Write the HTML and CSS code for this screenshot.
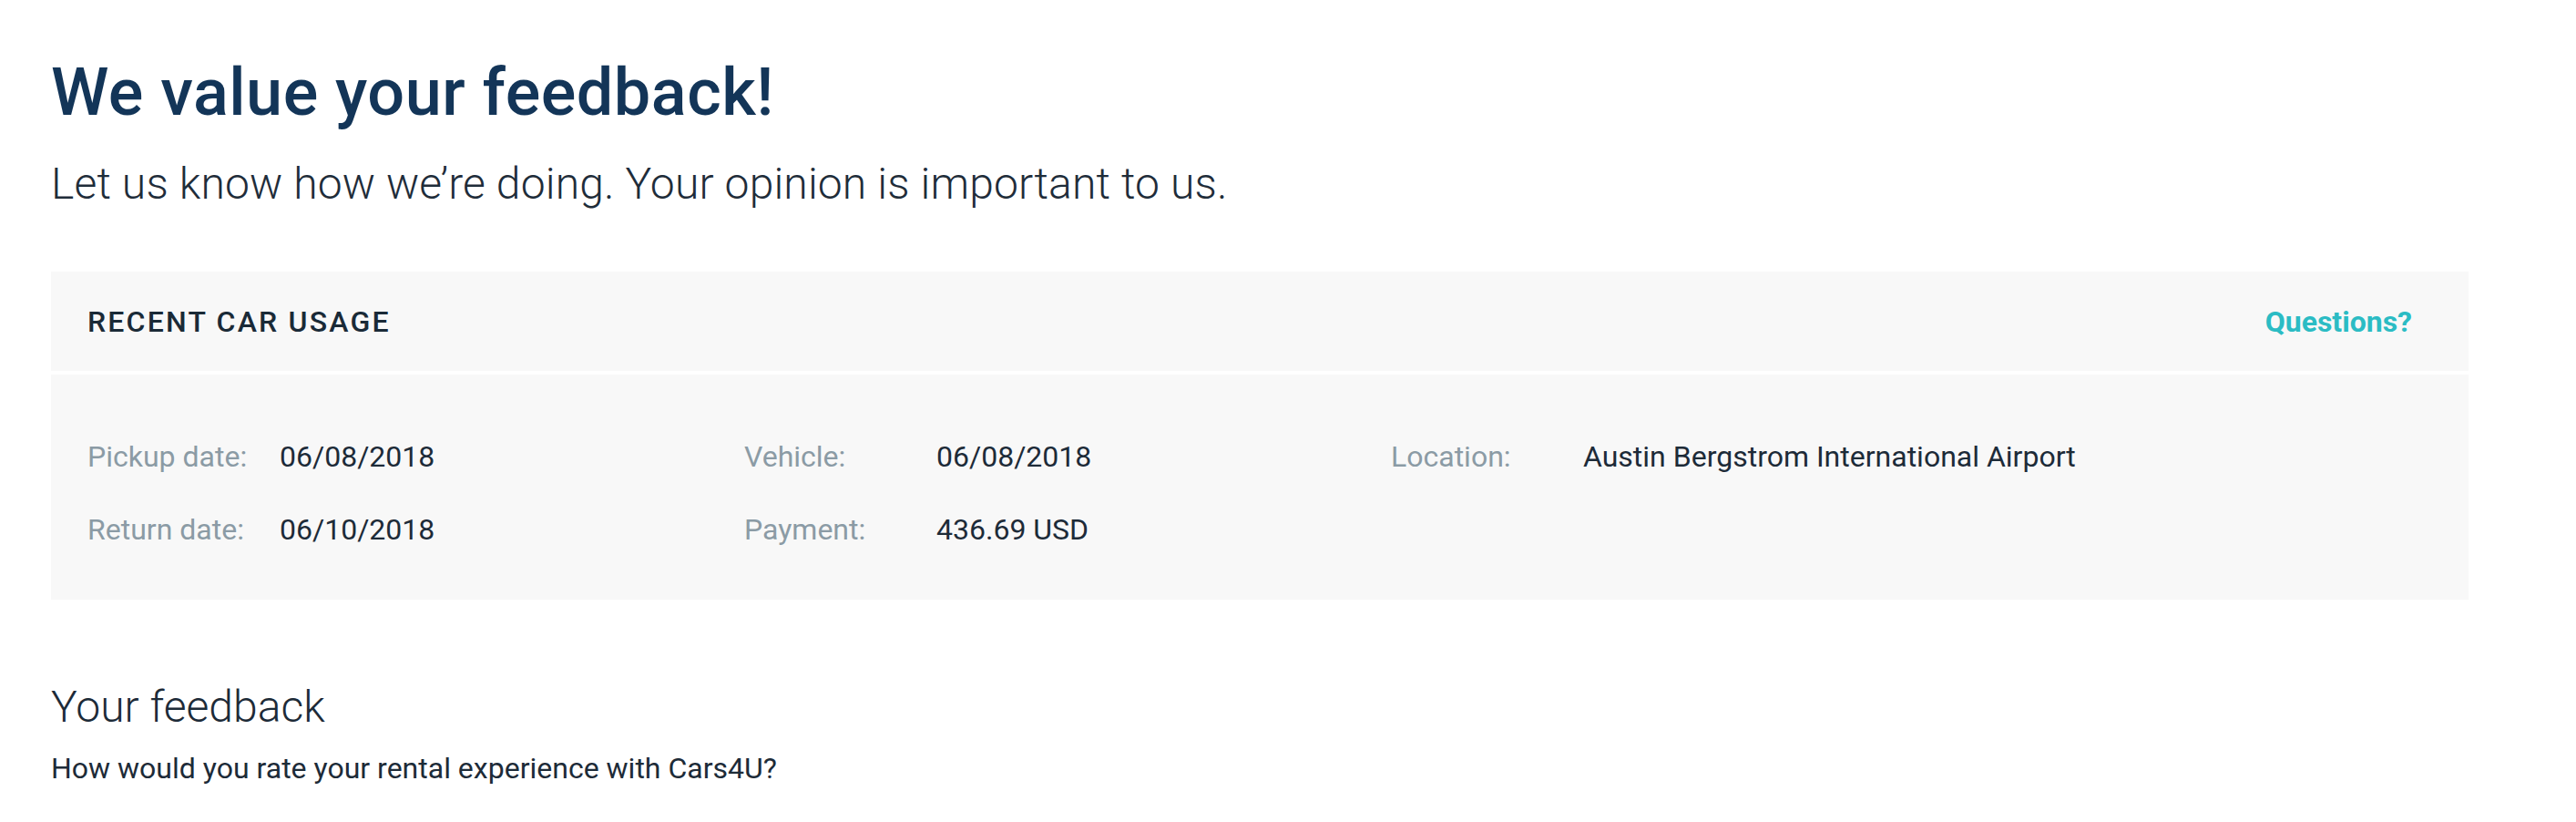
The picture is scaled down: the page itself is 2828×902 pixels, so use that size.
FILE: index.html
```html
<!DOCTYPE html>
<html lang="en">
<head>
<meta charset="utf-8">
<title>We value your feedback!</title>
<link rel="stylesheet" href="styles.css">
</head>
<body>
<main class="page">
  <h1 class="title">We value your feedback!</h1>
  <p class="lead">Let us know how we’re doing. Your opinion is important to us.</p>

  <section class="usage">
    <header class="usage-head">
      <h2 class="usage-title">RECENT CAR USAGE</h2>
      <a class="usage-link" href="#">Questions?</a>
    </header>
    <div class="usage-body">
      <dl class="col col-1">
        <div class="row"><dt>Pickup date:</dt><dd>06/08/2018</dd></div>
        <div class="row"><dt>Return date:</dt><dd>06/10/2018</dd></div>
      </dl>
      <dl class="col col-2">
        <div class="row"><dt>Vehicle:</dt><dd>06/08/2018</dd></div>
        <div class="row"><dt>Payment:</dt><dd>436.69 USD</dd></div>
      </dl>
      <dl class="col col-3">
        <div class="row"><dt>Location:</dt><dd>Austin Bergstrom International Airport</dd></div>
      </dl>
    </div>
  </section>

  <h2 class="feedback-title">Your feedback</h2>
  <p class="feedback-q">How would you rate your rental experience with Cars4U?</p>
</main>
</body>
</html>
```
FILE: styles.css
```css
html, body {
  margin: 0;
  padding: 0;
  background: #ffffff;
}

body {
  font-family: Roboto, "Liberation Sans", sans-serif;
  color: #1d2b38;
}

.page {
  padding: 59px 118px 0 56px;
}

.title {
  margin: 0;
  font-size: 72px;
  line-height: 86px;
  font-weight: 500;
  letter-spacing: 0.5px;
  color: #133558;
}

.lead {
  margin: 28px 0 0;
  font-size: 48px;
  line-height: 58px;
  font-weight: 300;
  letter-spacing: 0.15px;
  color: #1f2d3a;
}

.usage {
  margin-top: 67px;
  width: 2654px;
}

.usage-head {
  height: 109px;
  display: flex;
  align-items: center;
  justify-content: space-between;
  padding: 0 62px 0 40px;
  background: #f8f8f8;
  border-bottom: 4px solid #ffffff;
}

.usage-title {
  margin: 0;
  font-size: 32px;
  font-weight: 500;
  letter-spacing: 2.2px;
  color: #1a2a37;
}

.usage-link {
  font-size: 32px;
  font-weight: 700;
  color: #2bbcc4;
  text-decoration: none;
}

.usage-body {
  background: #f8f8f8;
  display: flex;
  padding: 66px 40px 53px;
}

.col {
  margin: 0;
  display: flex;
  flex-direction: column;
  gap: 32px;
}

.col-1 { width: 721px; }
.col-2 { width: 710px; }
.col-3 { flex: 1; }

.row {
  display: flex;
  font-size: 32px;
  line-height: 48px;
}

.row dt {
  width: 211px;
  flex: none;
  color: #8b9ba5;
  font-weight: 400;
}

.row dd {
  margin: 0;
  color: #1d2b38;
}

.feedback-title {
  margin: 89px 0 0;
  font-size: 48px;
  line-height: 58px;
  font-weight: 300;
  color: #1d2b38;
}

.feedback-q {
  margin: 14px 0 0;
  font-size: 32px;
  line-height: 48px;
  color: #1d2b38;
}
```
